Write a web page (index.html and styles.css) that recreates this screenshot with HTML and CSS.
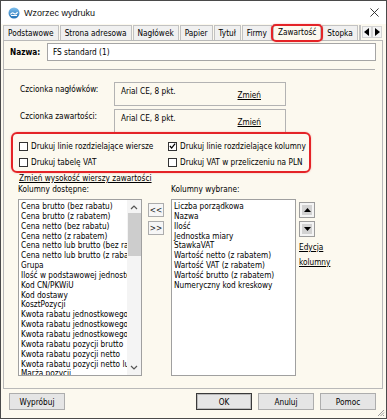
FILE: index.html
```html
<!DOCTYPE html>
<html lang="pl">
<head>
<meta charset="utf-8">
<title>Wzorzec wydruku</title>
<link rel="stylesheet" href="styles.css">
</head>
<body>
<div class="window">
  <div class="titlebar">
    <svg class="appicon" viewBox="0 0 12 12" width="12" height="12">
      <defs>
        <linearGradient id="g1" x1="0" y1="0" x2="0" y2="1">
          <stop offset="0" stop-color="#7fc0ee"/>
          <stop offset="1" stop-color="#1f6fb4"/>
        </linearGradient>
      </defs>
      <circle cx="6" cy="6" r="5.5" fill="url(#g1)"/>
      <path d="M2.5 7.5 Q4 5 6 6.5 T9.5 5" stroke="#fff" stroke-width="1.2" fill="none"/>
      <rect x="3" y="8" width="6" height="1" fill="#fff"/>
    </svg>
    <span class="title">Wzorzec wydruku</span>
    <svg class="close" viewBox="0 0 10 10" width="10" height="10">
      <path d="M0.5 0.5 L9.5 9.5 M9.5 0.5 L0.5 9.5" stroke="#222" stroke-width="1" fill="none"/>
    </svg>
  </div>
  <div class="client">
    <div class="tabs">
      <div class="tab">Podstawowe</div>
      <div class="tab">Strona adresowa</div>
      <div class="tab">Nagłówek</div>
      <div class="tab">Papier</div>
      <div class="tab">Tytuł</div>
      <div class="tab">Firmy</div>
      <div class="tab active">Zawartość</div>
      <div class="tab">Stopka</div>
      <div class="tab partial"></div>
      <div class="tabarrows">
        <span class="tarrow"><svg viewBox="0 0 6 8" width="6" height="8"><path d="M5 0 L5 8 L0 4 Z" fill="#000"/></svg></span>
        <span class="tarrow"><svg viewBox="0 0 6 8" width="6" height="8"><path d="M1 0 L1 8 L6 4 Z" fill="#000"/></svg></span>
      </div>
    </div>
    <div class="panel">
      <div class="name-row">
        <span class="name-label">Nazwa:</span>
        <div class="input">FS standard (1)</div>
      </div>
      <div class="sep"></div>
      <div class="font-row first">
        <span class="font-label">Czcionka nagłówków:</span>
        <div class="fontbox"><span class="fontval">Arial CE, 8 pkt.</span><a class="link change">Zmień</a></div>
      </div>
      <div class="font-row">
        <span class="font-label">Czcionka zawartości:</span>
        <div class="fontbox"><span class="fontval">Arial CE, 8 pkt.</span><a class="link change">Zmień</a></div>
      </div>
      <div class="checks">
        <label class="chk"><span class="box"></span>Drukuj linie rozdzielające wiersze</label>
        <label class="chk"><span class="box checked"><svg viewBox="0 0 8 8" width="8" height="8"><path d="M1 4 L3 6.3 L7 1.2" stroke="#000" stroke-width="1.4" fill="none"/></svg></span>Drukuj linie rozdzielające kolumny</label>
        <label class="chk"><span class="box"></span>Drukuj tabelę VAT</label>
        <label class="chk"><span class="box"></span>Drukuj VAT w przeliczeniu na PLN</label>
      </div>
      <a class="link rowheight">Zmień wysokość wierszy zawartości</a>
      <div class="cols">
        <div class="col left">
          <div class="col-label">Kolumny dostępne:</div>
          <div class="list">
            <div class="items">
              <div>Cena brutto (bez rabatu)</div>
              <div>Cena brutto (z rabatem)</div>
              <div>Cena netto (bez rabatu)</div>
              <div>Cena netto (z rabatem)</div>
              <div>Cena netto lub brutto (bez rabatu)</div>
              <div>Cena netto lub brutto (z rabatem)</div>
              <div>Grupa</div>
              <div>Ilość w podstawowej jednostce</div>
              <div>Kod CN/PKWiU</div>
              <div>Kod dostawy</div>
              <div>KosztPozycji</div>
              <div>Kwota rabatu jednostkowego</div>
              <div>Kwota rabatu jednostkowego</div>
              <div>Kwota rabatu jednostkowego</div>
              <div>Kwota rabatu pozycji brutto</div>
              <div>Kwota rabatu pozycji netto</div>
              <div>Kwota rabatu pozycji netto lub</div>
              <div>Marża pozycji</div>
            </div>
            <div class="scrollbar">
              <svg class="sarrow" viewBox="0 0 8 5" width="8" height="5"><path d="M1 4 L4 1 L7 4" stroke="#555" stroke-width="1.2" fill="none"/></svg>
              <div class="thumb"></div>
              <div class="track"></div>
              <svg class="sarrow" viewBox="0 0 8 5" width="8" height="5"><path d="M1 1 L4 4 L7 1" stroke="#555" stroke-width="1.2" fill="none"/></svg>
            </div>
          </div>
        </div>
        <div class="mid">
          <button class="sbtn">&lt;&lt;</button>
          <button class="sbtn">&gt;&gt;</button>
        </div>
        <div class="col right">
          <div class="col-label">Kolumny wybrane:</div>
          <div class="list">
            <div class="items">
              <div>Liczba porządkowa</div>
              <div>Nazwa</div>
              <div>Ilość</div>
              <div>Jednostka miary</div>
              <div>StawkaVAT</div>
              <div>Wartość netto (z rabatem)</div>
              <div>Wartość VAT (z rabatem)</div>
              <div>Wartość brutto (z rabatem)</div>
              <div>Numeryczny kod kreskowy</div>
            </div>
          </div>
        </div>
        <div class="side">
          <span class="mbtn"><span class="mfill"><svg viewBox="0 0 7 4" width="7" height="4"><path d="M0 4 L3.5 0 L7 4 Z" fill="#000"/></svg></span></span>
          <span class="mbtn"><span class="mfill"><svg viewBox="0 0 7 4" width="7" height="4"><path d="M0 0 L3.5 4 L7 0 Z" fill="#000"/></svg></span></span>
          <a class="link edit">Edycja<br>kolumny</a>
        </div>
      </div>
    </div>
    <div class="footer">
      <button class="btn">Wypróbuj</button>
      <div class="right-btns">
        <button class="btn default">OK</button>
        <button class="btn">Anuluj</button>
        <button class="btn">Pomoc</button>
      </div>
      <svg class="grip" viewBox="0 0 8 8" width="8" height="8">
        <path d="M7 1 L1 7 M7 3.5 L3.5 7 M7 6 L6 7" stroke="#9a9a9a" stroke-width="1" fill="none"/>
      </svg>
    </div>
  </div>
</div>
</body>
</html>
```
FILE: styles.css
```css
* { box-sizing: border-box; }
html, body { margin: 0; padding: 0; background: #ffffff; }
body {
  font-family: "DejaVu Sans Condensed", "DejaVu Sans", sans-serif;
  font-stretch: condensed;
  font-size: 8.2px;
  color: #000;
}
.window {
  width: 387px;
  height: 419px;
  border: 1px solid #4a4a4a;
  display: flex;
  flex-direction: column;
  background: #fcf9ef;
}
.titlebar {
  height: 23px;
  flex: none;
  background: #ffffff;
  display: flex;
  align-items: center;
  padding-left: 7px;
}
.appicon { display: block; }
.title {
  font-family: "Liberation Sans", Arial, sans-serif;
  font-stretch: normal;
  font-size: 9px;
  margin-left: 4px;
  color: #111;
}
.close { margin-left: auto; margin-right: 7px; width: 9px; height: 9px; }
.client { flex: 1; display: flex; flex-direction: column; }
.tabs {
  height: 16px;
  flex: none;
  display: flex;
  align-items: flex-end;
  padding-left: 2px;
  gap: 1px;
}
.tab {
  height: 15px;
  line-height: 14px;
  padding: 0 4px;
  border: 1px solid #c2c2c2;
  border-bottom: none;
  background: #f0f0f0;
  white-space: nowrap;
  position: relative;
}
.tab.active {
  height: 17px;
  line-height: 15px;
  margin-bottom: -1px;
  background: #fcf9ef;
  z-index: 2;
}
.tab.active::after {
  content: "";
  position: absolute;
  left: -3px; right: -3px; top: -1px; bottom: -1px;
  border: 2px solid #e42327;
  border-radius: 5px;
  box-shadow: 0 0 2px rgba(228, 35, 39, 0.35);
}
.tab.partial { width: 7px; padding: 0; }
.tabarrows {
  display: flex;
  margin-left: auto;
  margin-right: 4px;
  margin-bottom: 2px;
}
.tarrow {
  width: 10px;
  height: 12px;
  border: 1px solid #d4d4d4;
  background: #f4f4f4;
  display: flex;
  align-items: center;
  justify-content: center;
}
.panel {
  height: 349px;
  flex: none;
  margin: 0 3px 0 2px;
  border: 1px solid #b9b9b9;
  background: #fcf9ef;
  display: flex;
  flex-direction: column;
}
.name-row {
  display: flex;
  align-items: center;
  margin-top: 2px;
  padding: 0 6px;
  height: 18px;
}
.name-label { width: 37px; font-weight: bold; }
.input {
  flex: 1;
  height: 18px;
  border: 1px solid #a5a5a5;
  background: #fff;
  padding: 3px 5px 0;
  line-height: 10px;
}
.sep {
  height: 1px;
  background: #b0b0b0;
  margin: 8px 7px 0 0;
}
.font-row {
  display: flex;
  margin-top: 3px;
}
.font-row.first { margin-top: 12px; }
.font-label {
  width: 110px;
  padding: 2px 0 0 16px;
  line-height: 10px;
}
.fontbox {
  width: 172px;
  height: 24px;
  border: 1px solid #b3b3b3;
  display: flex;
  align-items: flex-start;
}
.fontval { padding: 3px 0 0 6px; line-height: 10px; }
.link { text-decoration: underline; color: #000; }
.change { margin-left: auto; margin-right: 24px; margin-top: 7px; line-height: 10px; }
.checks {
  position: relative;
  margin: 0 0 0 9px;
  width: 296px;
  padding: 5px 0 2px 6px;
  display: grid;
  grid-template-columns: 149px auto;
  grid-auto-rows: 16px;
}
.checks::after {
  content: "";
  position: absolute;
  left: -2px; right: -2px; top: -1px; bottom: -1px;
  border: 2px solid #e42327;
  border-radius: 6px;
  box-shadow: 0 0 2px rgba(228, 35, 39, 0.35);
}
.chk { display: flex; align-items: center; white-space: nowrap; }
.box {
  width: 9px;
  height: 9px;
  border: 1px solid #333;
  background: #fff;
  margin-right: 3px;
  display: flex;
  align-items: center;
  justify-content: center;
}
.rowheight {
  margin: 1px 0 0 15px;
  line-height: 10px;
  align-self: flex-start;
}
.cols {
  display: flex;
  margin: 1px 0 0 14px;
}
.col-label { line-height: 10px; height: 15px; }
.col.left { width: 124px; }
.col.right { width: 125px; margin-left: 7px; }
.list {
  height: 177px;
  border: 1px solid #a0a0a0;
  background: #fff;
  display: flex;
  overflow: hidden;
}
.items {
  flex: 1;
  overflow: hidden;
  padding: 2px 0 0 2px;
  line-height: 9.85px;
  white-space: nowrap;
}
.scrollbar {
  width: 14px;
  flex: none;
  background: #f4f4f4;
  display: flex;
  flex-direction: column;
  align-items: center;
  padding: 5px 0 5px;
}
.sarrow { display: block; flex: none; }
.thumb {
  width: 13px;
  height: 43px;
  background: #cdcdcd;
  margin-top: 3px;
  flex: none;
}
.track { flex: 1; }
.mid {
  width: 16px;
  margin-left: 6px;
  padding-top: 19px;
  display: flex;
  flex-direction: column;
  gap: 4px;
}
.sbtn {
  width: 16px;
  height: 14px;
  padding: 0;
  border: 1px solid #acacac;
  background: #f6f6f6;
  font-family: inherit;
  font-size: 8.2px;
  color: #222;
  line-height: 12px;
}
.side {
  margin-left: 3px;
  padding-top: 18px;
  display: flex;
  flex-direction: column;
  align-items: flex-start;
}
.mbtn {
  width: 16px;
  height: 16px;
  border: 1px solid #9c9c9c;
  padding: 2px;
  background: #f4f4f4;
  margin-bottom: 3px;
}
.mfill {
  display: flex;
  width: 100%;
  height: 100%;
  background: #d2d2d2;
  align-items: center;
  justify-content: center;
}
.edit { line-height: 15px; margin-top: 0; }
.footer {
  flex: 1;
  position: relative;
  display: flex;
  padding: 4px 10px 0 8px;
  align-items: flex-start;
}
.right-btns { margin-left: auto; display: flex; gap: 6px; }
.btn {
  height: 17px;
  width: 56px;
  padding: 0;
  border: 1px solid #adadad;
  background: #e5e5e5;
  font-family: inherit;
  font-size: 8.2px;
  color: #000;
}
.btn.default { border: 1px solid #3a3a3a; box-shadow: inset 0 0 0 1px #b9b9b9; }
.grip { position: absolute; right: 1px; bottom: 1px; }
```
